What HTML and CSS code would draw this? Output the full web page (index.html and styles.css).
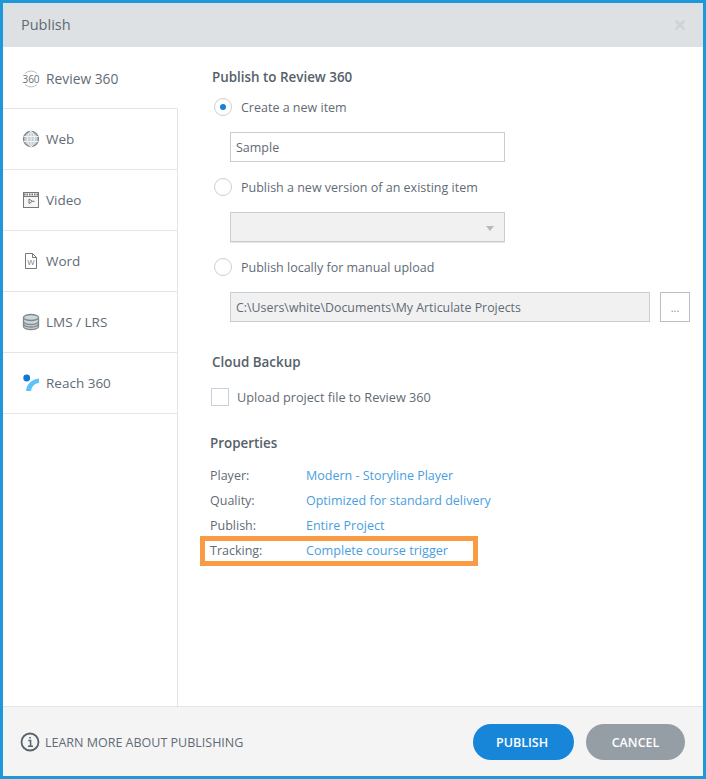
FILE: index.html
```html
<!DOCTYPE html>
<html lang="en">
<head>
<meta charset="utf-8">
<title>Publish</title>
<link rel="stylesheet" href="styles.css">
</head>
<body>
<div class="dialog">
  <header class="titlebar">
    <span class="title">Publish</span>
    <svg class="close" width="12" height="12" viewBox="0 0 12 12"><path d="M1.500 1.500l9 9M10.500 1.500l-9 9" stroke="#cfd1d3" stroke-width="2.400" fill="none"/></svg>
  </header>
  <div class="body">
    <nav class="sidebar">
      <div class="tab tab-active">
        <svg class="tab-icon" width="18" height="18" viewBox="0 0 18 18"><path d="M3 3.500A8.500 8.500 0 0 1 15 3.500M15 14.500A8.500 8.500 0 0 1 3 14.500" stroke="#b4c3c8" fill="none"/><text x="9" y="12.500" text-anchor="middle" class="icon-text">360</text></svg>
        <span>Review 360</span>
      </div>
      <div class="tab">
        <svg class="tab-icon" width="18" height="18" viewBox="0 0 18 18"><circle cx="9" cy="9" r="7.500" fill="#c9d0d4" stroke="#7f8a90" stroke-width="1.400"/><ellipse cx="9" cy="9" rx="3.500" ry="7.500" fill="none" stroke="#eef1f2"/><path d="M1.500 6.500h15M1.500 11.500h15M9 1.500v15" stroke="#eef1f2" fill="none"/></svg>
        <span>Web</span>
      </div>
      <div class="tab">
        <svg class="tab-icon" width="18" height="18" viewBox="0 0 18 18"><rect x="1.500" y="1.500" width="15" height="15" fill="#f6f6f6" stroke="#777"/><path d="M2 3.500h14" stroke="#777" stroke-width="2" stroke-dasharray="1.500 1"/><path d="M2 5.500h14" stroke="#777"/><path d="M7 8v4.500l3.500-2.200z" fill="none" stroke="#777"/><path d="M10.500 10.300h2" stroke="#777"/></svg>
        <span>Video</span>
      </div>
      <div class="tab">
        <svg class="tab-icon" width="18" height="18" viewBox="0 0 18 18"><path d="M3.500 1.500h7l4 4v11h-11zM10.500 1.500v4h4" fill="#fff" stroke="#777"/><text x="9" y="13" text-anchor="middle" class="icon-w">W</text></svg>
        <span>Word</span>
      </div>
      <div class="tab">
        <svg class="tab-icon" width="18" height="18" viewBox="0 0 18 18"><path d="M1.500 4.500v9c0 1.600 3.300 3 7.500 3s7.500-1.400 7.500-3v-9" fill="#cfd6d9" stroke="#7f8a90" stroke-width="1.300"/><ellipse cx="9" cy="4.500" rx="7.500" ry="3" fill="#cfd6d9" stroke="#7f8a90" stroke-width="1.300"/><path d="M1.500 8.500c0 1.600 3.300 3 7.500 3s7.500-1.400 7.500-3M1.500 11c0 1.600 3.300 3 7.500 3s7.500-1.400 7.500-3" fill="none" stroke="#7f8a90" stroke-width="1.300"/></svg>
        <span>LMS / LRS</span>
      </div>
      <div class="tab">
        <svg class="tab-icon" width="18" height="18" viewBox="0 0 18 18"><circle cx="4.700" cy="4" r="3.400" fill="#0f78d4"/><path d="M4 17C4.500 10.500 9 5.500 17 4.500V9C12.500 9.500 9.800 12.500 9 17z" fill="#5cc2fa"/></svg>
        <span>Reach 360</span>
      </div>
    </nav>
    <main class="content">
      <h2 class="heading heading-first">Publish to Review 360</h2>
      <label class="option option-first"><span class="radio radio-on"></span>Create a new item</label>
      <div class="field field-input">Sample</div>
      <label class="option"><span class="radio"></span>Publish a new version of an existing item</label>
      <div class="field field-select"><span class="caret"></span></div>
      <label class="option"><span class="radio"></span>Publish locally for manual upload</label>
      <div class="path-row">
        <div class="field field-path">C:\Users\white\Documents\My Articulate Projects</div>
        <div class="browse">...</div>
      </div>
      <h2 class="heading heading-cloud">Cloud Backup</h2>
      <label class="check-row"><span class="checkbox"></span>Upload project file to Review 360</label>
      <h2 class="heading heading-props">Properties</h2>
      <div class="props">
        <div class="prop"><span class="prop-name">Player:</span><a class="prop-link">Modern - Storyline Player</a></div>
        <div class="prop"><span class="prop-name">Quality:</span><a class="prop-link">Optimized for standard delivery</a></div>
        <div class="prop"><span class="prop-name">Publish:</span><a class="prop-link">Entire Project</a></div>
        <div class="prop prop-highlight"><span class="prop-name">Tracking:</span><a class="prop-link">Complete course trigger</a></div>
      </div>
    </main>
  </div>
  <footer class="footer">
    <svg class="info" width="20" height="20" viewBox="0 0 20 20"><circle cx="10" cy="10" r="8.500" fill="none" stroke="#56636d" stroke-width="1.800"/><path d="M8.300 8.500h2.300v5.500M8 14.300h5M9.300 5.800h1.600" fill="none" stroke="#56636d" stroke-width="1.500"/></svg>
    <span class="learn">LEARN MORE ABOUT PUBLISHING</span>
    <button class="btn btn-primary">PUBLISH</button>
    <button class="btn btn-cancel">CANCEL</button>
  </footer>
</div>
</body>
</html>
```
FILE: styles.css
```css
* { box-sizing: border-box; }
html, body { margin: 0; height: 100%; }
body { font-family: "Open Sans", "Noto Sans", sans-serif; font-size: 12.5px; color: #5c6670; background: #fff; }
.dialog { width: 706px; height: 779px; border: 3px solid #1e98d8; display: flex; flex-direction: column; background: #fff; }
.titlebar { height: 44px; flex: none; background: #dee1e4; display: flex; align-items: center; justify-content: space-between; padding: 0 17px 2px 18px; }
.title { font-size: 14.500px; color: #5f6b75; }
.close { display: block; margin-top: 2px; }
.body { flex: 1; display: flex; min-height: 0; }
.sidebar { width: 175px; flex: none; display: flex; flex-direction: column; border-right: 1px solid #e2e4e7; }
.tab { height: 61px; margin-right: -1px; flex: none; display: flex; align-items: center; gap: 6px; padding: 0 0 0 19px; border-bottom: 1px solid #e2e6ea; border-right: 1px solid #e2e4e7; font-size: 13.500px; color: #5f6b75; background: #fff; }
.tab-active { position: relative; z-index: 1; height: 62px; padding-top: 2px; border-right-color: #fff; font-size: 13.800px; }
.tab-icon { flex: none; display: block; }
.icon-text { font-family: "Open Sans", sans-serif; font-size: 10px; fill: #6a6f73; }
.icon-w { font-family: "Open Sans", sans-serif; font-size: 8px; fill: #777; }
.content { flex: 1; min-width: 0; padding-left: 34px; }
.heading { margin: 0; font-size: 13.400px; font-weight: 600; line-height: 18px; color: #56616b; }
.heading-first { margin-top: 21px; }
.option { display: flex; align-items: center; gap: 9px; margin: 15px 0 0 2px; height: 20px; color: #5f6b75; font-size: 12.500px; }
.option-first { margin-top: 11px; }
.radio { width: 18px; height: 18px; border-radius: 50%; border: 1px solid #c9d1d8; background: #fff; display: flex; align-items: center; justify-content: center; flex: none; }
.radio-on::after { content: ""; width: 6px; height: 6px; border-radius: 50%; background: #1680d8; }
.field { height: 30px; margin: 15px 0 0 18px; width: 275px; border: 1px solid #c6ced5; line-height: 30px; padding-left: 5px; color: #5f6b75; font-size: 12.500px; }
.field-select { background: #f1f1f1; position: relative; box-shadow: 0 1px 0 #e6e6e6; }
.caret { position: absolute; right: 10px; top: 13px; border: 4px solid transparent; border-top: 5px solid #b5b9bc; border-bottom: 0; }
.path-row { display: flex; align-items: flex-start; gap: 10px; margin-left: 18px; margin-top: 15px; }
.field-path { margin: 0; width: 420px; background: #f1f1f1; font-size: 12.370px; }
.browse { width: 30px; height: 30px; border: 1px solid #b9bfc4; text-align: center; line-height: 30px; font-size: 11px; color: #8a9096; }
.heading-cloud { margin-top: 31px; }
.check-row { display: flex; align-items: center; gap: 8px; margin-top: 17px; height: 18px; color: #5f6b75; font-size: 12.700px; }
.checkbox { width: 18px; height: 18px; border: 1px solid #c9d1d8; background: #fff; flex: none; margin-left: -1px; }
.heading-props { margin-top: 28px; margin-left: -2px; }
.props { margin-top: 11px; margin-left: -12px; width: 278px; }
.prop { height: 25px; display: flex; align-items: center; padding-left: 10px; font-size: 12.500px; }
.prop-name { width: 96px; flex: none; color: #5f6b75; }
.prop-link { color: #4a9ee0; white-space: nowrap; }
.prop-highlight { height: 30px; margin-top: -2px; border: 5px solid #f99a44; padding: 0 0 2px 5px; }
.prop-highlight .prop-link { font-size: 12.650px; }
.footer { height: 70px; flex: none; background: #f4f4f4; border-top: 1px solid #e1e6ea; display: flex; align-items: center; padding: 0 18px 0 17px; }
.info { flex: none; }
.learn { margin-left: 5px; padding-top: 1px; font-size: 12.500px; color: #5f6b75; flex: 1; }
.btn { border: 0; height: 36px; border-radius: 18px; color: #fff; font: 600 12.500px "Open Sans", sans-serif; padding: 1px 0 0; }
.btn-primary { width: 101px; background: #1786d9; margin-right: 12px; padding-right: 3px; }
.btn-cancel { width: 99px; background: #959ea5; }
```
